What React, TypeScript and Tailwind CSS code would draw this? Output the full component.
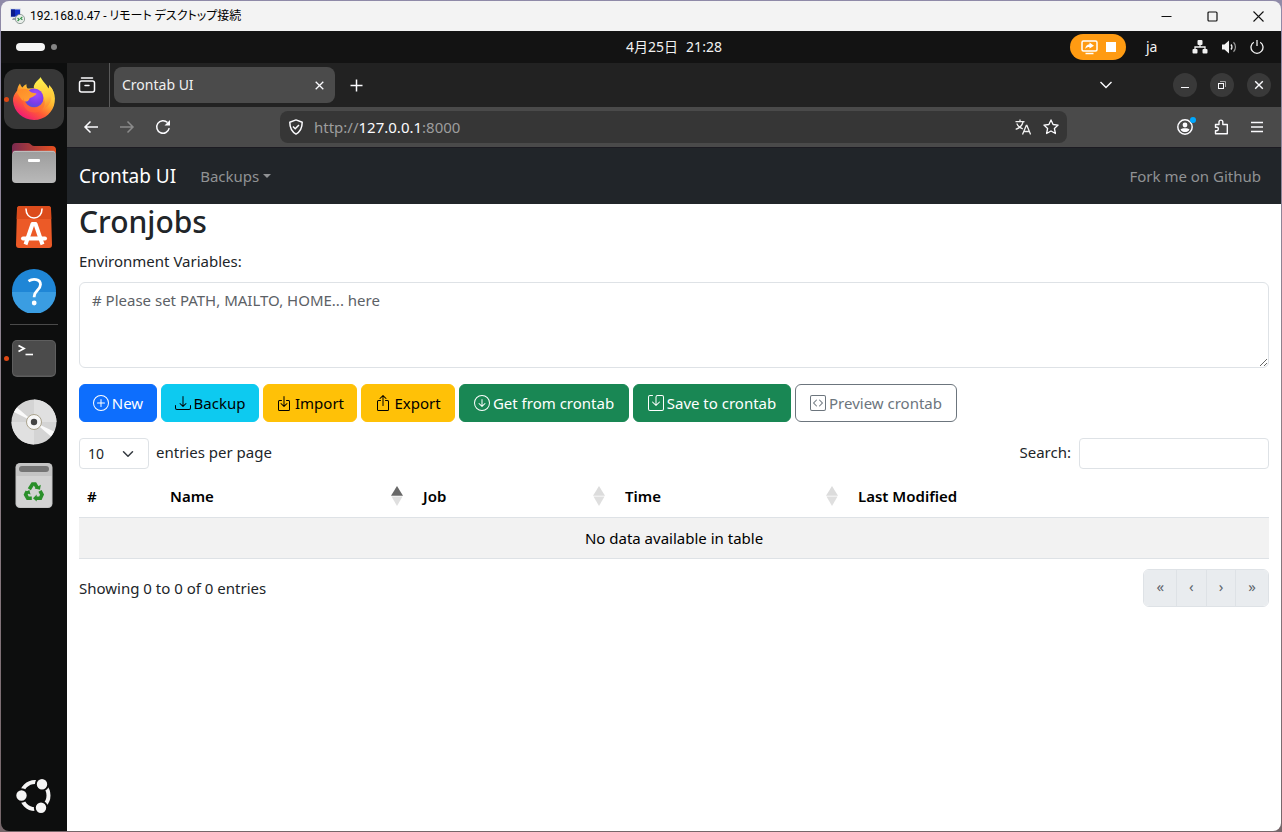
import { useState, type ReactNode } from 'react'
import {
  BsArrowDownCircle,
  BsBoxArrowInDown,
  BsBoxArrowUp,
  BsCodeSquare,
  BsDownload,
  BsPlusCircle,
  BsSave,
} from 'react-icons/bs'

function RemoteIcon() {
  return (
    <svg width="16" height="16" viewBox="0 0 16 16">
      <rect x="1" y="0.5" width="11" height="9" fill="#d5dce8" />
      <rect x="2" y="1.5" width="9" height="7" fill="#1230c8" />
      <path d="M2 1.5h4v7H2z" fill="#0a1a8a" />
      <path d="M4 10h5l1 2H3z" fill="#9aa3ad" />
      <circle cx="11" cy="11" r="4.6" fill="#e9eeea" stroke="#7d8a86" strokeWidth="0.8" />
      <path d="M8.6 10l1.6 1.5-1.6 1.5M13.4 8.8l-1.8 1.6 1.8 1.4" fill="none" stroke="#2f8f45" strokeWidth="1.1" />
    </svg>
  )
}

function FirefoxIcon() {
  return (
    <svg width="44" height="44" viewBox="0 0 44 44">
      <defs>
        <linearGradient id="ff-body" x1="0.85" y1="0.1" x2="0.2" y2="0.95">
          <stop offset="0" stopColor="#fff04a" />
          <stop offset="0.35" stopColor="#ffb02e" />
          <stop offset="0.65" stopColor="#ff5a36" />
          <stop offset="1" stopColor="#f0127c" />
        </linearGradient>
        <linearGradient id="ff-flame" x1="0.5" y1="0" x2="0.6" y2="1">
          <stop offset="0" stopColor="#fff44f" />
          <stop offset="0.6" stopColor="#ffc83a" />
          <stop offset="1" stopColor="#ff7a2d" />
        </linearGradient>
        <radialGradient id="ff-globe" cx="0.6" cy="0.3" r="0.8">
          <stop offset="0" stopColor="#a04bff" />
          <stop offset="0.6" stopColor="#7b3ce8" />
          <stop offset="1" stopColor="#4a55d6" />
        </radialGradient>
        <linearGradient id="ff-head" x1="0" y1="0" x2="1" y2="1">
          <stop offset="0" stopColor="#ff8a26" />
          <stop offset="1" stopColor="#ffa436" />
        </linearGradient>
      </defs>
      <path d="M5 14C5.500 10 6.500 8.500 8 6.500c.5 2 1.500 3.200 2.500 4 .8-1.500 2.500-3 4-3.300-.2 1.700.2 3.300 1.200 4.300L28 11c4-2 6 0 8 1l3.500-1c2.800 4 4 9.500 3.200 14C41.500 35 33 43 22 43S1.800 34.500 1 24c-.3-4 1.500-7.500 4-10z" fill="url(#ff-body)" />
      <path d="M28.500 0c-.5 2-4.500 4-6 7.500-1.200 2-.8 4 .5 5.500 6 0 9.500 4.500 9.500 10 0 5-2.500 8-5 10 8-1 12.500-8 12-15 .9 1 1.600 2.500 1.900 4C42.500 15 40.500 11 37 8c0 1.500 0 2.500-.4 3.500C34.500 7 31 5 28.500 0z" fill="url(#ff-flame)" />
      <circle cx="22" cy="21" r="9.500" fill="url(#ff-globe)" />
      <path d="M4.500 14.500C8 11.500 13 11 16.500 12.500c1.500 3 4.500 3.500 8 3.800-.5 2.200-3 3.200-6.500 4.700-1 .8-.5 2.700-3.500 3.500-4 1-7-5-10-10z" fill="url(#ff-head)" />
      <path d="M11 21c2 6 7 9.500 12 9 5.500-.5 9-4 8.500-9 3 6 .5 13-7.500 14.500-7.500 1-14-4.500-13-14.500z" fill="#ff6a35" opacity="0.55" />
    </svg>
  )
}

function FilesIcon() {
  return (
    <svg width="46" height="42" viewBox="0 0 46 42">
      <defs>
        <linearGradient id="files-back" x1="0" y1="0" x2="1" y2="0">
          <stop offset="0" stopColor="#7a2a50" />
          <stop offset="1" stopColor="#e8501f" />
        </linearGradient>
        <linearGradient id="files-front" x1="0" y1="0" x2="0" y2="1">
          <stop offset="0" stopColor="#9c9c9c" />
          <stop offset="1" stopColor="#b9b9b9" />
        </linearGradient>
      </defs>
      <path d="M1 5a4 4 0 0 1 4-4h12c3 0 3 3 6 3h18a4 4 0 0 1 4 4v12H1z" fill="url(#files-back)" />
      <rect x="1" y="9" width="44" height="32" rx="4" fill="url(#files-front)" />
      <path d="M2 10.500a3 3 0 0 1 3-1.200h36a3 3 0 0 1 3 1.200" stroke="#cfcfcf" strokeWidth="0.8" fill="none" />
      <rect x="17" y="17" width="12" height="3" rx="1" fill="#fff" />
    </svg>
  )
}

function SoftwareIcon() {
  return (
    <svg width="36" height="42" viewBox="0 0 36 42">
      <path d="M4 0h28a3 3 0 0 1 3 3l1 36a3 3 0 0 1-3 3H3a3 3 0 0 1-3-3L1 3a3 3 0 0 1 3-3z" fill="#ec5a27" />
      <path d="M4 0h28a3 3 0 0 1 3 3l.3 10H.7L1 3a3 3 0 0 1 3-3z" fill="#dc4c1c" />
      <path d="M10 3c0 5 3 9 8 9s8-4 8-9" fill="none" stroke="#fff" strokeWidth="1.500" strokeLinecap="round" />
      <path d="M9.500 38.500L16.500 18h3L26.500 38.500" fill="none" stroke="#fff" strokeWidth="4" strokeLinejoin="round" />
      <path d="M7 32.500h22" stroke="#fff" strokeWidth="4" strokeLinecap="round" />
    </svg>
  )
}

function HelpIcon() {
  return (
    <svg width="44" height="44" viewBox="0 0 44 44">
      <circle cx="22" cy="22" r="22" fill="#1f86d6" />
      <path d="M0 23a22 22 0 0 0 44 0z" fill="#3a9de2" />
      <path d="M16.500 12.200c4.500-3 12-2.200 12 3.300 0 5.500-6.300 6-6.300 12v.8" fill="none" stroke="#fff" strokeWidth="2.800" />
      <circle cx="22.200" cy="34" r="2.400" fill="#fff" />
    </svg>
  )
}

function TerminalIcon() {
  return (
    <svg width="44" height="37" viewBox="0 0 44 37">
      <rect width="44" height="37" rx="5" fill="#5e5e5e" />
      <rect x="1" y="1" width="42" height="34.500" rx="4" fill="#4b4b4b" />
      <path d="M6.500 5.500l5.500 3-5.500 3" fill="none" stroke="#fff" strokeWidth="1.800" />
      <path d="M13.500 14.500h7.500" stroke="#fff" strokeWidth="1.600" />
    </svg>
  )
}

function DiscIcon() {
  return (
    <svg width="46" height="46" viewBox="0 0 46 46">
      <circle cx="23" cy="23" r="22.500" fill="#d4d4d4" />
      <path d="M23 23L6 8.500A22.500 22.500 0 0 0 3 13zM23 23l17 14.500a22.500 22.500 0 0 0 3-5z" fill="#fafafa" />
      <path d="M23 23L23 .5A22.500 22.500 0 0 1 45.500 23zM23 23v22.500A22.500 22.500 0 0 1 .5 23z" fill="#e0e0e0" />
      <circle cx="23" cy="23" r="7.500" fill="#f7f7f7" stroke="#a39b82" strokeWidth="0.900" />
      <circle cx="23" cy="23" r="3.200" fill="#454545" />
    </svg>
  )
}

function TrashIcon() {
  return (
    <svg width="38" height="46" viewBox="0 0 38 46">
      <rect x="0.500" y="0" width="37" height="45" rx="4.500" fill="#c4c4c4" />
      <path d="M1.500 13h35v27a4 4 0 0 1-4 4h-27a4 4 0 0 1-4-4z" fill="#d3d3d3" />
      <rect x="4" y="3" width="30" height="6" rx="3" fill="#757575" />
      <g transform="translate(9 18.500) scale(0.82)" fill="none" stroke="#2a8f2a" strokeWidth="4.400">
        <path d="M6.500 9.500L10.500 3h3l3 5" />
        <path d="M19.500 11.500l2.500 4.500-2 4.500h-5.500" />
        <path d="M9.500 20.500H4.500L2 16l2-4" />
      </g>
      <g transform="translate(9 18.500) scale(0.82)" fill="#2a8f2a">
        <path d="M13 8.500l6.500 1.500 1-6z" />
        <path d="M15.500 16v8.500l-4.500-4z" />
        <path d="M.5 13.500l6-3 1.500 5.500z" />
      </g>
    </svg>
  )
}

function UbuntuIcon() {
  return (
    <svg width="36" height="36" viewBox="0 0 36 36">
      <circle cx="19" cy="17.500" r="13.500" fill="none" stroke="#f5f5f5" strokeWidth="4" />
      <g fill="#f5f5f5" stroke="#0e0e0e" strokeWidth="2">
        <circle cx="5.500" cy="17.500" r="6.200" />
        <circle cx="26" cy="6.200" r="6.200" />
        <circle cx="25" cy="29.800" r="6.200" />
      </g>
    </svg>
  )
}

function TranslateIcon() {
  return (
    <svg width="16" height="16" viewBox="0 0 16 16" fill="none" stroke="#f0f0f0" strokeWidth="1.300">
      <path d="M.5 2.700h9M5 .5v2M1.800 4.500c1 2.500 3.500 4.500 6 5.300M8 3c-.8 3.500-3.500 6-7.300 7.300" />
      <path d="M7.500 15.500L11.300 6.500h.6l3.700 9M8.800 12.500h5.600" />
    </svg>
  )
}

function DockItem({ label, running, children }: { label: string; running?: boolean; children: ReactNode }) {
  return (
    <button type="button" aria-label={label} className="relative flex h-16 w-full items-center justify-center">
      {running && <span className="absolute left-[3px] size-[5px] rounded-full bg-[#dd4814]" />}
      {children}
    </button>
  )
}

function Dock() {
  return (
    <nav aria-label="Dock" className="flex w-[66px] shrink-0 flex-col items-center bg-[#0d0e0e] pt-1 pb-[3px]">
      <DockItem label="Firefox" running>
        <span className="flex size-15 items-center justify-center rounded-xl bg-[#373737]">
          <FirefoxIcon />
        </span>
      </DockItem>
      <DockItem label="Files"><FilesIcon /></DockItem>
      <DockItem label="App Center"><SoftwareIcon /></DockItem>
      <DockItem label="Help"><HelpIcon /></DockItem>
      <div className="my-px h-px w-12 shrink-0 bg-[#4a4a4a]" />
      <DockItem label="Terminal" running><TerminalIcon /></DockItem>
      <DockItem label="Disc"><DiscIcon /></DockItem>
      <DockItem label="Trash"><TrashIcon /></DockItem>
      <div className="flex-1" />
      <DockItem label="Show Apps"><UbuntuIcon /></DockItem>
    </nav>
  )
}

function RemoteTitleBar() {
  return (
    <header className="flex h-[30px] shrink-0 items-center bg-[#f3f3f3] pl-2 text-black">
      <RemoteIcon />
      <span className="flex-1 pl-[5px] font-['Roboto','Noto_Sans_CJK_JP',sans-serif] text-xs [font-feature-settings:'palt']">
        192.168.0.47 - リモート デスクトップ接続
      </span>
      <button type="button" aria-label="Minimize" className="flex w-[46px] justify-center">
        <svg width="11" height="11" viewBox="0 0 11 11"><path d="M0.500 5.500h10" stroke="#111" /></svg>
      </button>
      <button type="button" aria-label="Maximize" className="flex w-[46px] justify-center">
        <svg width="11" height="11" viewBox="0 0 11 11"><rect x="1" y="1" width="9" height="9" rx="1" fill="none" stroke="#111" strokeWidth="1.200" /></svg>
      </button>
      <button type="button" aria-label="Close" className="flex w-[46px] justify-center">
        <svg width="11" height="11" viewBox="0 0 11 11"><path d="M0.500 0.500l10 10M10.500 0.500l-10 10" stroke="#111" strokeWidth="1.100" /></svg>
      </button>
    </header>
  )
}

function GnomeBar() {
  return (
    <div className="grid h-8 shrink-0 grid-cols-[66px_1fr_auto_1fr] items-center bg-[#131313] text-sm text-[#f2f2f2]">
      <div className="flex items-center gap-[6px] pl-[15px]">
        <span className="h-2 w-[29px] rounded-full bg-[#f5f5f5]" />
        <span className="size-[6px] rounded-full bg-[#858585]" />
      </div>
      <time className="col-start-3 flex gap-2">
        <span>4月25日</span>
        <span>21:28</span>
      </time>
      <div className="flex items-center justify-end pr-[17px]">
        <button type="button" aria-label="Stop screen sharing" className="flex h-[26px] w-14 items-center justify-center gap-2 rounded-full bg-[#ff9b12]">
          <svg width="17" height="15" viewBox="0 0 17 15">
            <rect x="1" y="1" width="15" height="10" rx="1.500" fill="none" stroke="#fff" strokeWidth="1.500" />
            <path d="M4.500 13.500h8" stroke="#fff" strokeWidth="1.500" />
            <path d="M8.500 2.500L13 5.700 8.500 8.500V7c-2 0-3.200.6-4.200 2 0-2.800 1.500-4.600 4.200-4.800z" fill="#fff" />
          </svg>
          <span className="size-[10px] bg-white" />
        </button>
        <span className="ml-5 w-[14px]">ja</span>
        <svg className="ml-8" width="16" height="14" viewBox="0 0 16 14" fill="#f2f2f2">
          <rect x="5.500" y="0" width="5" height="5" rx="1" />
          <rect x="0.500" y="9" width="5" height="4.500" rx="1" />
          <rect x="10.500" y="9" width="5" height="4.500" rx="1" />
          <path d="M8 4v3M3 9.500V7h10v2.500" fill="none" stroke="#f2f2f2" strokeWidth="1.300" />
        </svg>
        <svg className="ml-[14px]" width="15" height="14" viewBox="0 0 15 14">
          <path d="M0 4.500h2.500L7 .5v13l-4.500-4H0z" fill="#f2f2f2" />
          <path d="M9 4.500c1.200 1.300 1.200 3.700 0 5" fill="none" stroke="#f2f2f2" strokeWidth="1.400" />
          <path d="M11.500 2.300c2.600 2.500 2.600 7 0 9.500" fill="none" stroke="#9a9a9a" strokeWidth="1.200" />
        </svg>
        <svg className="ml-[13px]" width="14" height="14" viewBox="0 0 14 14" fill="none" stroke="#f2f2f2" strokeWidth="1.300">
          <path d="M3.800 2.200a6 6 0 1 0 6.400 0M7 0v6" />
        </svg>
      </div>
    </div>
  )
}

function BrowserTabs() {
  return (
    <div className="flex h-11 shrink-0 items-center bg-[#222] text-[#fbfbfe]">
      <button type="button" aria-label="Open tabs" className="flex h-full w-[43px] items-center justify-center border-r border-[#5a5a5a] pr-[2px]">
        <svg width="18" height="18" viewBox="0 0 18 18" fill="none" stroke="currentColor" strokeWidth="1.500">
          <path d="M3.500 2h11" strokeLinecap="round" />
          <rect x="1.500" y="5" width="15" height="11" rx="2" />
          <path d="M7 9.500h4" strokeLinecap="round" />
        </svg>
      </button>
      <div className="ml-1 flex h-9 w-[221px] items-center justify-between rounded-lg bg-[#4b4b4b] px-2">
        <span className="text-sm text-[#f0f0f0]">Crontab UI</span>
        <button type="button" aria-label="Close tab" className="flex size-4 items-center justify-center">
          <svg width="9" height="9" viewBox="0 0 9 9"><path d="M.7.700l7.600 7.600M8.300.700L.7 8.300" stroke="currentColor" strokeWidth="1.300" /></svg>
        </button>
      </div>
      <button type="button" aria-label="New tab" className="ml-[15px]">
        <svg width="13" height="13" viewBox="0 0 13 13"><path d="M6.500 0.500v12M0.500 6.500h12" stroke="currentColor" strokeWidth="1.500" /></svg>
      </button>
      <div className="flex-1" />
      <button type="button" aria-label="List all tabs" className="mr-15">
        <svg width="14" height="8" viewBox="0 0 14 8"><path d="M1.500 1l5.500 5.500L12.500 1" fill="none" stroke="currentColor" strokeWidth="1.400" /></svg>
      </button>
      <div className="flex gap-[13px] pr-[10px]">
        <button type="button" aria-label="Minimize window" className="flex size-6 items-center justify-center rounded-full bg-[#393939]">
          <svg width="10" height="10" viewBox="0 0 10 10"><path d="M1 7.500h8" stroke="currentColor" /></svg>
        </button>
        <button type="button" aria-label="Restore window" className="flex size-6 items-center justify-center rounded-full bg-[#393939]">
          <svg width="10" height="10" viewBox="0 0 10 10" fill="none" stroke="currentColor">
            <rect x="1.500" y="3.500" width="5" height="5" />
            <path d="M3 1.500h5.500V7" stroke="#a5a5a5" />
          </svg>
        </button>
        <button type="button" aria-label="Close window" className="flex size-6 items-center justify-center rounded-full bg-[#393939]">
          <svg width="10" height="10" viewBox="0 0 10 10"><path d="M1.200 1.200l7.600 7.600M8.800 1.200L1.200 8.800" stroke="currentColor" strokeWidth="1.400" /></svg>
        </button>
      </div>
    </div>
  )
}

function BrowserToolbar() {
  return (
    <div className="flex h-[41px] shrink-0 items-center border-b border-[#1c1b22] bg-[#4a4a4a] pl-4 text-[#fbfbfe]">
      <div className="flex gap-5">
        <button type="button" aria-label="Back">
          <svg width="16" height="16" viewBox="0 0 16 16" fill="none" stroke="currentColor" strokeWidth="1.500"><path d="M15 8H2M7.500 2.500L2 8l5.500 5.500" /></svg>
        </button>
        <button type="button" aria-label="Forward" disabled className="text-[#8b8b8b]">
          <svg width="16" height="16" viewBox="0 0 16 16" fill="none" stroke="currentColor" strokeWidth="1.500"><path d="M1 8h13M8.500 2.500L14 8l-5.500 5.500" /></svg>
        </button>
        <button type="button" aria-label="Reload">
          <svg width="16" height="16" viewBox="0 0 16 16" fill="none" stroke="currentColor" strokeWidth="1.500">
            <path d="M14.200 9.200A6.300 6.300 0 1 1 12.500 3.500" />
            <path d="M15 1v5.500H9.500z" fill="currentColor" stroke="none" />
          </svg>
        </button>
      </div>
      <div className="mr-[110px] ml-[109px] flex h-8 flex-1 items-center rounded-lg bg-[#363636] px-2">
        <svg width="16" height="16" viewBox="0 0 16 16" fill="none" stroke="currentColor" strokeWidth="1.500">
          <path d="M8 .9L14.200 3.200c0 5.300-1.700 9.300-6.200 11.900C3.500 12.500 1.800 8.500 1.800 3.200z" strokeLinejoin="round" />
          <path d="M5 7.500l2.200 2.200L11 6" />
        </svg>
        <a href="http://127.0.0.1:8000" className="flex-1 pl-[10px] text-[15px] text-[#9d9d9d]">
          http://<span className="text-[#fbfbfe]">127.0.0.1</span>:8000
        </a>
        <button type="button" aria-label="Translate page" className="mr-3"><TranslateIcon /></button>
        <button type="button" aria-label="Bookmark page">
          <svg width="16" height="16" viewBox="0 0 16 16" fill="none" stroke="currentColor" strokeWidth="1.300" strokeLinejoin="round">
            <path d="M8 .9l2.100 4.600 5 .6-3.700 3.400 1 5L8 12l-4.400 2.500 1-5L.9 6.100l5-.6z" />
          </svg>
        </button>
      </div>
      <div className="flex items-center gap-5 pr-4">
        <button type="button" aria-label="Account" className="relative">
          <svg width="16" height="16" viewBox="0 0 16 16">
            <circle cx="8" cy="8" r="7.200" fill="none" stroke="currentColor" strokeWidth="1.500" />
            <circle cx="8" cy="6" r="2.400" fill="currentColor" />
            <path d="M3.500 10.500c1.500-1.800 7.500-1.800 9 0-1 1.800-2.700 2.600-4.500 2.600s-3.500-.8-4.500-2.600z" fill="currentColor" />
          </svg>
          <span className="absolute -top-[2px] -right-[3px] size-[6px] rounded-full bg-[#00a8ff]" />
        </button>
        <button type="button" aria-label="Extensions">
          <svg width="16" height="16" viewBox="0 0 16 16" fill="none" stroke="currentColor" strokeWidth="1.400" strokeLinejoin="round">
            <path d="M2.500 5.500H6V3a1.900 1.900 0 0 1 3.800 0v2.500h4.500v9.300H2.500v-3H4a1.800 1.800 0 0 0 0-3.500H2.500z" />
          </svg>
        </button>
        <button type="button" aria-label="Application menu">
          <svg width="16" height="16" viewBox="0 0 16 16"><path d="M2 3.500h12M2 8h12M2 12.500h12" stroke="currentColor" strokeWidth="1.300" /></svg>
        </button>
      </div>
    </div>
  )
}

function SortMark({ sorted }: { sorted?: boolean }) {
  return (
    <svg width="12" height="20" viewBox="0 0 12 20">
      <path d="M6 0l6 9.800H0z" fill={sorted ? '#686868' : '#dcdcdc'} />
      <path d="M6 20l5.500-9.500H.5z" fill="#dfdfdf" />
    </svg>
  )
}

const ACTIONS = [
  { label: 'New', icon: BsPlusCircle, style: 'min-w-[78px] border-[#0d6efd] bg-[#0d6efd] text-white' },
  { label: 'Backup', icon: BsDownload, style: 'min-w-[98px] border-[#0dcaf0] bg-[#0dcaf0] text-black' },
  { label: 'Import', icon: BsBoxArrowInDown, style: 'min-w-[94px] border-[#ffc107] bg-[#ffc107] text-black' },
  { label: 'Export', icon: BsBoxArrowUp, style: 'min-w-[94px] border-[#ffc107] bg-[#ffc107] text-black' },
  { label: 'Get from crontab', icon: BsArrowDownCircle, style: 'min-w-[170px] border-[#198754] bg-[#198754] text-white' },
  { label: 'Save to crontab', icon: BsSave, style: 'min-w-[158px] border-[#198754] bg-[#198754] text-white' },
  { label: 'Preview crontab', icon: BsCodeSquare, style: 'min-w-[162px] border-[#6c757d] bg-white text-[#6c757d]' },
]

const COLUMNS = [
  { label: '#', width: 'w-[83px]', sortable: false },
  { label: 'Name', width: 'w-[253px]', sortable: true, sorted: true },
  { label: 'Job', width: 'w-[202px]', sortable: true },
  { label: 'Time', width: 'w-[233px]', sortable: true },
  { label: 'Last Modified', width: 'w-auto', sortable: false },
]

const PAGES = [
  { label: 'First', glyph: '«' },
  { label: 'Previous', glyph: '‹' },
  { label: 'Next', glyph: '›' },
  { label: 'Last', glyph: '»' },
]

function CrontabPage() {
  const [env, setEnv] = useState('')
  const [search, setSearch] = useState('')
  const [pageSize, setPageSize] = useState('10')

  return (
    <div className="flex flex-1 flex-col bg-white text-[15px] leading-[22px] text-[#212529]">
      <nav className="flex h-14 items-center bg-[#212529] pr-5 pb-px pl-3">
        <a href="#" className="text-[19px] text-white">Crontab UI</a>
        <button type="button" className="ml-6 flex items-center gap-1 text-[#909294]">
          Backups
          <svg width="8" height="4" viewBox="0 0 8 4"><path d="M0 0h8L4 4z" fill="currentColor" /></svg>
        </button>
        <a href="#" className="ml-auto text-[#909294]">Fork me on Github</a>
      </nav>

      <main className="px-3">
        <h2 className="mb-[10px] text-[30px] leading-9 font-medium">Cronjobs</h2>
        <label htmlFor="env" className="block">Environment Variables:</label>
        <textarea
          id="env"
          value={env}
          onChange={(e) => setEnv(e.target.value)}
          placeholder="# Please set PATH, MAILTO, HOME... here"
          className="mt-[10px] block h-[86px] w-full rounded-md border border-[#dee2e6] px-3 py-[6px] placeholder:text-[#5c6166]"
        />

        <div className="mt-4 flex flex-wrap gap-1">
          {ACTIONS.map(({ label, icon: Icon, style }) => (
            <button key={label} type="button" className={`flex h-[38px] items-center justify-center gap-[3px] rounded-md border pb-px whitespace-nowrap ${style}`}>
              <Icon size={16} />
              {label}
            </button>
          ))}
        </div>

        <div className="mt-4 flex items-start justify-between">
          <div className="flex items-start gap-[7px]">
            <div className="relative flex items-center">
              <select
                id="page-size"
                value={pageSize}
                onChange={(e) => setPageSize(e.target.value)}
                className="h-[31px] w-[70px] appearance-none rounded border border-[#dee2e6] bg-white pl-2 text-sm"
              >
                <option>10</option>
                <option>25</option>
                <option>50</option>
                <option>100</option>
              </select>
              <svg className="pointer-events-none absolute right-[15px]" width="12" height="12" viewBox="0 0 16 16">
                <path d="m2 5 6 6 6-6" fill="none" stroke="#343a40" strokeWidth="2" strokeLinecap="round" strokeLinejoin="round" />
              </svg>
            </div>
            <label htmlFor="page-size" className="pt-[3px]">entries per page</label>
          </div>
          <div className="flex items-start gap-2">
            <label htmlFor="search" className="pt-[3px]">Search:</label>
            <input
              id="search"
              type="search"
              value={search}
              onChange={(e) => setSearch(e.target.value)}
              className="h-[31px] w-[190px] rounded border border-[#dee2e6] px-2 text-sm"
            />
          </div>
        </div>

        <table className="mt-[7px] w-full table-fixed border-collapse text-black">
          <thead>
            <tr className="h-[41px] border-b border-[#dee2e6]">
              {COLUMNS.map((col) => (
                <th key={col.label} scope="col" className={`px-2 text-left font-semibold ${col.width}`}>
                  <div className="flex items-center justify-between pr-1">
                    {col.label}
                    {col.sortable && <SortMark sorted={col.sorted} />}
                  </div>
                </th>
              ))}
            </tr>
          </thead>
          <tbody>
            <tr className="h-[41px] border-b border-[#dee2e6] bg-[#f2f2f2]">
              <td colSpan={5} className="text-center">No data available in table</td>
            </tr>
          </tbody>
        </table>

        <div className="mt-[10px] flex items-center justify-between">
          <span>Showing 0 to 0 of 0 entries</span>
          <div className="flex overflow-hidden rounded-md border border-[#dee2e6]">
            {PAGES.map((page) => (
              <button
                key={page.label}
                type="button"
                disabled
                aria-label={page.label}
                className="h-9 border-l border-[#dee2e6] bg-[#e9ecef] px-3 pb-1 text-[#5f666d] first:border-l-0"
              >
                {page.glyph}
              </button>
            ))}
          </div>
        </div>
      </main>
    </div>
  )
}

export default function App() {
  return (
    <div className="flex min-h-screen flex-col bg-linear-to-b from-[#8f8aa8] via-[#8d8088] to-[#75666a] p-px font-['Noto_Sans','Noto_Sans_CJK_JP',sans-serif]">
      <div className="flex flex-1 flex-col overflow-hidden rounded-lg">
        <RemoteTitleBar />
        <GnomeBar />
        <div className="flex flex-1">
          <Dock />
          <div className="flex min-w-0 flex-1 flex-col">
            <BrowserTabs />
            <BrowserToolbar />
            <CrontabPage />
          </div>
        </div>
      </div>
    </div>
  )
}
